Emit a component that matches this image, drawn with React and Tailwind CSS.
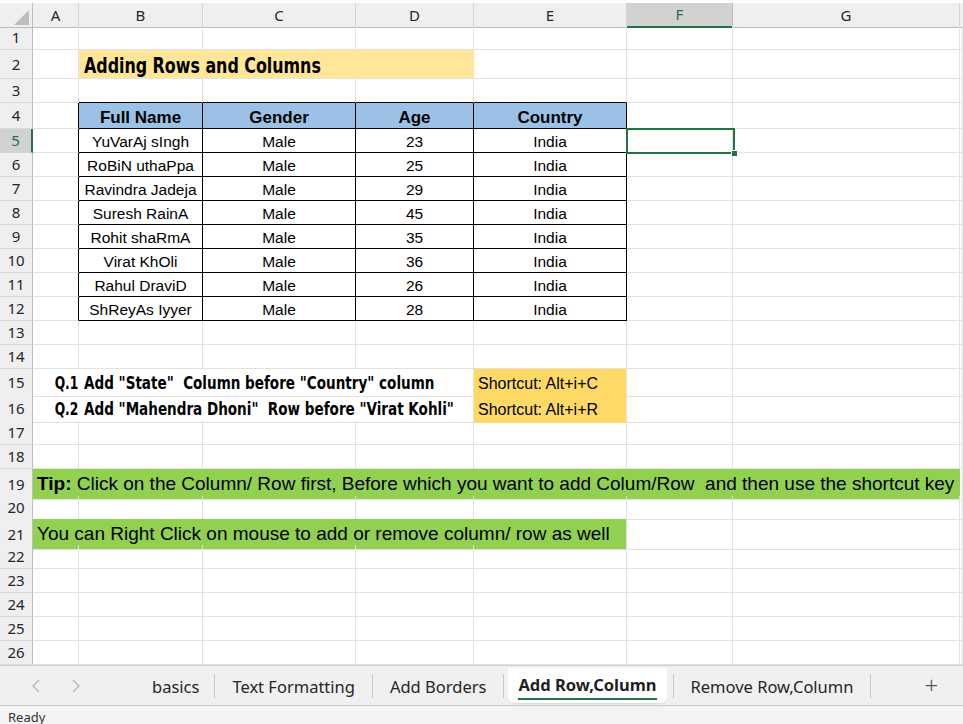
import React from "react";

const GRID = "grid grid-cols-[33px_46px_124px_153px_118px_153px_106px_227px_1fr]";
const GL = "border-r border-b border-[#e1e1e1]";
const TB = "border-r border-b border-black";
const BODY = "font-['Liberation_Sans',Arial,sans-serif] text-black";
const COND = "font-['DejaVu_Sans_Condensed','DejaVu_Sans',sans-serif] font-stretch-condensed font-bold";
const UI = "font-['Noto_Sans','Open_Sans',sans-serif]";

function RowHead({ n, sel }) {
  if (sel) {
    return (
      <div className={`${UI} bg-[#d2d2d2] border-b border-b-[#d4d4d4] border-r-2 border-r-[#217346] flex items-center justify-center text-[15px] text-[#217346]`}>
        {n}
      </div>
    );
  }
  return (
    <div className={`${UI} bg-[#efefef] border-b border-b-[#d9d9d9] border-r border-r-[#bdbdbd] flex items-center justify-center text-[15px] text-[#262626]`}>
      {n}
    </div>
  );
}

function Empty({ n = 1 }) {
  return Array.from({ length: n }).map((_, i) => <div key={i} className={GL} />);
}

function Row({ h, n, sel, children }) {
  return (
    <div className={`${GRID} ${h}`}>
      <RowHead n={n} sel={sel} />
      {children}
    </div>
  );
}

const people = [
  ["YuVarAj sIngh", "23"],
  ["RoBiN uthaPpa", "25"],
  ["Ravindra Jadeja", "29"],
  ["Suresh RainA", "45"],
  ["Rohit shaRmA", "35"],
  ["Virat KhOli", "36"],
  ["Rahul DraviD", "26"],
  ["ShReyAs Iyyer", "28"],
];

function DataCell({ children }) {
  return (
    <div className={`${TB} ${BODY} text-[15.5px] flex items-center justify-center leading-none pt-[2px]`}>
      {children}
    </div>
  );
}

function HeadCell({ children }) {
  return (
    <div className={`${TB} ${BODY} bg-[#9bc2e6] font-bold text-[17px] flex items-center justify-center leading-none pt-[3px]`}>
      {children}
    </div>
  );
}

function ColHeader() {
  const letters = ["A", "B", "C", "D", "E", "F", "G"];
  return (
    <div className={`${GRID} h-[26px] bg-white`}>
      <div className="bg-[#efefef] border-r border-r-[#bdbdbd] border-b border-b-[#bdbdbd] mt-[3px] relative">
        <svg className="absolute right-[3px] bottom-[2px]" width="15" height="15" viewBox="0 0 15 15">
          <polygon points="15,0 15,15 0,15" fill="#bdbdbd" />
        </svg>
      </div>
      {letters.map((l) =>
        l === "F" ? (
          <div
            key={l}
            className={`${UI} mt-[3px] bg-[#d2d2d2] border-r border-r-[#bdbdbd] border-b-2 border-b-[#217346] flex items-center justify-center text-[15px] text-[#217346]`}
          >
            {l}
          </div>
        ) : (
          <div
            key={l}
            className={`${UI} mt-[3px] bg-[#efefef] border-r border-r-[#d4d4d4] border-b border-b-[#bdbdbd] flex items-center justify-center text-[15px] text-[#262626]`}
          >
            {l}
          </div>
        )
      )}
      <div className="mt-[3px] bg-[#efefef] border-b border-b-[#bdbdbd]" />
    </div>
  );
}

function Chevron({ dir }) {
  return (
    <svg width="8" height="14" viewBox="0 0 8 14" fill="none" stroke="#b3b3b3" strokeWidth="1.2">
      {dir === "left" ? <polyline points="7,1 1,7 7,13" /> : <polyline points="1,1 7,7 1,13" />}
    </svg>
  );
}

function Sep() {
  return <div className="w-px h-[24px] bg-[#c8c8c8]" />;
}

function Tabs() {
  return (
    <div className="h-[42px] bg-[#f0f0f0] border-t border-t-[#d0d0d0] border-b border-b-[#c6c6c6] flex items-start relative">
      <div className="flex items-center h-full pl-[32px] gap-[32px] w-[120px]">
        <Chevron dir="left" />
        <Chevron dir="right" />
      </div>
      <div className={`${UI} flex items-center h-full text-[16.5px] text-[#262626]`}>
        <div className="pl-[32px] pr-[15px] pt-[4px]">basics</div>
        <Sep />
        <div className="px-[17px] pt-[4px]">Text Formatting</div>
        <Sep />
        <div className="px-[17px] pt-[4px]">Add Borders</div>
        <Sep />
        <div className="ml-[4px] h-[35px] self-start mt-[2px] bg-white rounded-b-[6px] px-[10px] flex flex-col justify-center shadow-[0_1px_1px_rgba(0,0,0,0.08)]">
          <div className="font-bold text-[#1f1f1f] leading-tight pt-[4px]">Add Row,Column</div>
          <div className="h-[2px] bg-[#217346] mt-[2px]" />
        </div>
        <div className="ml-[6px]"><Sep /></div>
        <div className="px-[17px] pt-[4px]">Remove Row,Column</div>
        <Sep />
        <div className="ml-[53px] text-[24px] font-light text-[#555] leading-none pb-[1px]">+</div>
      </div>
    </div>
  );
}

export default function App() {
  return (
    <div className="w-[963px] h-[724px] overflow-hidden bg-white flex flex-col select-none">
      <div className="relative">
        <ColHeader />
        <Row h="h-[24px]" n={1}><Empty n={8} /></Row>
        <Row h="h-[29px]" n={2}>
          <Empty />
          <div className={`col-span-3 bg-[#ffe699] border-b border-[#e1e1e1] flex items-center pl-[5px] ${COND} text-[21px] leading-none text-black pt-[5px] overflow-hidden`}>
            <span className="inline-block whitespace-pre origin-left scale-x-[0.84]">Adding Rows and Columns</span>
          </div>
          <Empty n={4} />
        </Row>
        <Row h="h-[24px]" n={3}>
          <div className="border-r border-r-[#e1e1e1] border-b border-b-[#e1e1e1]" />
          <div className="border-r border-r-[#e1e1e1] border-b border-b-black" />
          <div className="border-r border-r-[#e1e1e1] border-b border-b-black" />
          <div className="border-r border-r-[#e1e1e1] border-b border-b-black" />
          <div className="border-r border-r-[#e1e1e1] border-b border-b-black" />
          <Empty n={3} />
        </Row>
        <Row h="h-[26px]" n={4}>
          <div className="border-r border-r-black border-b border-b-[#e1e1e1]" />
          <HeadCell>Full Name</HeadCell>
          <HeadCell>Gender</HeadCell>
          <HeadCell>Age</HeadCell>
          <HeadCell>Country</HeadCell>
          <Empty n={3} />
        </Row>
        {people.map(([name, age], i) => (
          <Row key={name} h="h-[24px]" n={5 + i} sel={i === 0}>
            <div className="border-r border-r-black border-b border-b-[#e1e1e1]" />
            <DataCell>{name}</DataCell>
            <DataCell>Male</DataCell>
            <DataCell>{age}</DataCell>
            <DataCell>India</DataCell>
            <Empty n={3} />
          </Row>
        ))}
        <Row h="h-[24px]" n={13}><Empty n={8} /></Row>
        <Row h="h-[24px]" n={14}><Empty n={8} /></Row>
        {[
          ["Q.1", 'Add "State"  Column before "Country" column', "Shortcut: Alt+i+C", 15],
          ["Q.2", 'Add "Mahendra Dhoni"  Row before "Virat Kohli"', "Shortcut: Alt+i+R", 16],
        ].map(([q, text, sc, n]) => (
          <Row key={q} h="h-[26px]" n={n}>
            <div className={`border-b border-[#e1e1e1] flex items-center justify-end pr-[1px] ${COND} text-[17.5px] text-black pt-[1px]`}>
              <span className="inline-block whitespace-pre origin-right scale-x-[0.78]">{q}</span>
            </div>
            <div className={`col-span-3 border-r border-b border-[#e1e1e1] flex items-center pl-[5px] ${COND} text-[17.5px] text-black pt-[1px]`}>
              <span className="inline-block whitespace-pre origin-left scale-x-[0.86]">{text}</span>
            </div>
            <div className={`bg-[#ffd966] border-b border-b-[#ffd966] border-r border-r-[#e1e1e1] flex items-center pl-[4px] ${BODY} text-[16px] pt-[3px]`}>
              {sc}
            </div>
            <Empty n={3} />
          </Row>
        ))}
        <Row h="h-[24px]" n={17}><Empty n={8} /></Row>
        <Row h="h-[24px]" n={18}><Empty n={8} /></Row>
        <Row h="h-[27px]" n={19}>
          <div className={`col-span-7 bg-[#92d050] border-b border-[#e1e1e1] flex items-center pl-[4px] whitespace-pre ${BODY} text-[19px] pt-[1px]`}>
            <span className="font-bold">Tip:</span> Click on the Column/ Row first, Before which you want to add Colum/Row  and then use the shortcut key
          </div>
          <Empty />
        </Row>
        <Row h="h-[23px]" n={20}><Empty n={8} /></Row>
        <Row h="h-[26px]" n={21}>
          <div className={`col-span-5 bg-[#92d050] border-b border-[#e1e1e1] border-r border-r-[#e1e1e1] flex items-center pl-[4px] ${BODY} text-[19px] pt-[1px]`}>
            You can Right Click on mouse to add or remove column/ row as well
          </div>
          <Empty n={3} />
        </Row>
        {[22, 23, 24, 25, 26].map((n) => (
          <Row key={n} h="h-[24px]" n={n}><Empty n={8} /></Row>
        ))}
        <div className="absolute left-[626px] top-[128px] w-[109px] h-[26px] border-2 border-[#217346] pointer-events-none">
          <div className="absolute right-[-5px] bottom-[-5px] w-[7px] h-[7px] bg-[#217346] border border-white" />
        </div>
      </div>
      <Tabs />
      <div className={`${UI} flex-1 bg-[#f3f3f3] pl-[8px] pt-[5px] text-[13px] text-[#333] leading-none`}>Ready</div>
    </div>
  );
}
